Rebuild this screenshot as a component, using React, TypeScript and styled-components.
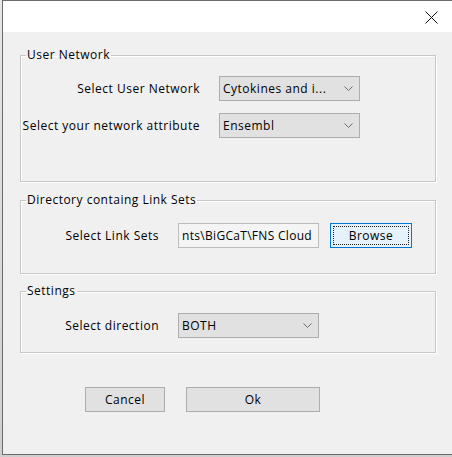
import React from "react";
import styled, { createGlobalStyle } from "styled-components";

const Global = createGlobalStyle`
  html, body { margin: 0; padding: 0; }
  body {
    width: 452px;
    height: 457px;
    overflow: hidden;
    background: #dcdcdc;
    font-family: "Open Sans", "Noto Sans", sans-serif;
    font-size: 12px;
    letter-spacing: 0.5px;
    color: #000;
  }
`;

const Desktop = styled.div`
  width: 452px;
  height: 457px;
  padding-left: 2px;
  box-sizing: border-box;
  background: linear-gradient(#e6e6e6, #cfcfcf);
`;

const Window = styled.div`
  width: 470px;
  height: 455px;
  box-sizing: border-box;
  border: 1px solid #6b6b6b;
  border-right: none;
  background: #f0f0f0;
  display: flex;
  flex-direction: column;
`;

const TitleBar = styled.div`
  height: 31px;
  background: #ffffff;
  display: flex;
  justify-content: flex-end;
  align-items: center;
  padding-right: 34px;
  flex: none;
`;

const CloseIcon = styled.svg`
  width: 13px;
  height: 13px;
  margin-top: 1px;
`;

const Body = styled.div`
  flex: 1;
  display: flex;
  flex-direction: column;
  padding: 15px 0 0 17px;
`;

const Group = styled.fieldset<{ $mt: number; $pt: number; $pb: number }>`
  width: 416px;
  box-sizing: border-box;
  margin: ${(p) => p.$mt}px 0 0 0;
  padding: ${(p) => p.$pt}px 0 ${(p) => p.$pb}px 0;
  border: 1px solid #c7c7c7;
  box-shadow: inset 1px 1px 0 #ffffff, 1px 1px 0 #ffffff;
  display: flex;
  flex-direction: column;
  gap: 12px;
  min-width: 0;
`;

const Legend = styled.legend`
  margin-left: 5px;
  padding: 0 1px;
  line-height: 16px;
  font-size: 12px;
`;

const Row = styled.div<{ $labelWidth: number }>`
  display: grid;
  grid-template-columns: ${(p) => p.$labelWidth}px auto auto;
  justify-content: start;
  align-items: center;
`;

const Label = styled.span`
  text-align: right;
  white-space: nowrap;
  padding-right: 19px;
`;

const Combo = styled.div<{ $w: number }>`
  width: ${(p) => p.$w}px;
  height: 25px;
  box-sizing: border-box;
  border: 1px solid #adadad;
  background: #e1e1e1;
  display: flex;
  align-items: center;
  justify-content: space-between;
  padding: 0 6px 0 3px;
  white-space: nowrap;
`;

const Chevron = styled.svg`
  width: 9px;
  height: 5px;
  flex: none;
`;

const TextField = styled.div`
  width: 141px;
  height: 25px;
  box-sizing: border-box;
  border: 1px solid #bcbcbc;
  background: #f4f4f4;
  display: flex;
  align-items: center;
  justify-content: flex-end;
  overflow: hidden;
  padding-right: 6px;
  white-space: nowrap;
  letter-spacing: 0.3px;
`;

const Button = styled.div<{ $w: number; $focused?: boolean }>`
  width: ${(p) => p.$w}px;
  height: 25px;
  box-sizing: border-box;
  border: 1px solid ${(p) => (p.$focused ? "#0078d7" : "#adadad")};
  background: ${(p) => (p.$focused ? "#e5f1fb" : "#e1e1e1")};
  display: flex;
  align-items: center;
  justify-content: center;
  position: relative;
  ${(p) =>
    p.$focused
      ? `&::after {
          content: "";
          position: absolute;
          inset: 2px;
          border: 1px dotted #202020;
        }`
      : ""}
`;

const BrowseWrap = styled.div`
  margin-left: 11px;
`;

const ButtonBar = styled.div`
  display: flex;
  gap: 21px;
  margin: 34px 0 0 65px;
`;

const ChevronIcon = () => (
  <Chevron viewBox="0 0 9 5">
    <polyline points="0.5,0.5 4.5,4.5 8.5,0.5" fill="none" stroke="#6a6a6a" strokeWidth="1" />
  </Chevron>
);

export default function App() {
  return (
    <>
      <Global />
      <Desktop>
        <Window>
          <TitleBar>
            <CloseIcon viewBox="0 0 13 13">
              <line x1="0.5" y1="0.5" x2="12.5" y2="12.5" stroke="#111" strokeWidth="1" />
              <line x1="12.5" y1="0.5" x2="0.5" y2="12.5" stroke="#111" strokeWidth="1" />
            </CloseIcon>
          </TitleBar>
          <Body>
            <Group $mt={0} $pt={13} $pb={43}>
              <Legend>User Network</Legend>
              <Row $labelWidth={198}>
                <Label>Select User Network</Label>
                <Combo $w={141}>
                  <span>Cytokines and i...</span>
                  <ChevronIcon />
                </Combo>
              </Row>
              <Row $labelWidth={198}>
                <Label>Select your network attribute</Label>
                <Combo $w={141}>
                  <span>Ensembl</span>
                  <ChevronIcon />
                </Combo>
              </Row>
            </Group>
            <Group $mt={10} $pt={15} $pb={25}>
              <Legend>Directory containg Link Sets</Legend>
              <Row $labelWidth={157}>
                <Label>Select Link Sets</Label>
                <TextField>nts\BiGCaT\FNS Cloud</TextField>
                <BrowseWrap>
                  <Button $w={82} $focused>
                    Browse
                  </Button>
                </BrowseWrap>
              </Row>
            </Group>
            <Group $mt={9} $pt={14} $pb={14}>
              <Legend>Settings</Legend>
              <Row $labelWidth={157}>
                <Label>Select direction</Label>
                <Combo $w={141}>
                  <span>BOTH</span>
                  <ChevronIcon />
                </Combo>
              </Row>
            </Group>
            <ButtonBar>
              <Button $w={80}>Cancel</Button>
              <Button $w={134}>Ok</Button>
            </ButtonBar>
          </Body>
        </Window>
      </Desktop>
    </>
  );
}
